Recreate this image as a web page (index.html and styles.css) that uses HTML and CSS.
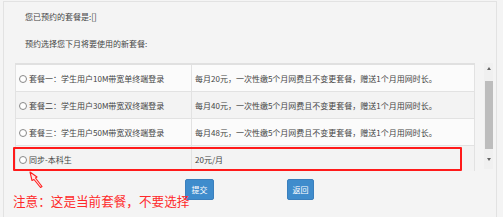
FILE: index.html
```html
<!DOCTYPE html>
<html lang="zh-CN">
<head>
<meta charset="utf-8">
<title>套餐预约</title>
<link rel="stylesheet" href="styles.css">
</head>
<body>
<div class="panel">
  <p class="line first">您已预约的套餐是:[]</p>
  <p class="line second">预约选择您下月将要使用的新套餐:</p>
  <div class="scroll-area">
    <div class="table-view">
      <table class="plans">
        <tr class="odd">
          <td class="c1"><span class="radio"></span>套餐一：学生用户10M带宽单终端登录</td>
          <td class="c2">每月20元，一次性缴5个月网费且不变更套餐，赠送1个月用网时长。</td>
        </tr>
        <tr class="even">
          <td class="c1"><span class="radio"></span>套餐二：学生用户30M带宽双终端登录</td>
          <td class="c2">每月40元，一次性缴5个月网费且不变更套餐，赠送1个月用网时长。</td>
        </tr>
        <tr class="odd">
          <td class="c1"><span class="radio"></span>套餐三：学生用户50M带宽双终端登录</td>
          <td class="c2">每月48元，一次性缴5个月网费且不变更套餐，赠送1个月用网时长。</td>
        </tr>
        <tr class="even">
          <td class="c1"><span class="radio"></span>同步-本科生</td>
          <td class="c2">20元/月</td>
        </tr>
      </table>
    </div>
    <div class="scrollbar">
      <span class="arrow up"></span>
      <span class="thumb"></span>
      <span class="arrow down"></span>
    </div>
  </div>
  <div class="actions">
    <span class="btn submit">提交</span>
    <span class="btn back">返回</span>
  </div>
</div>
<div class="highlight"></div>
<svg class="pointer" width="20" height="24" viewBox="0 0 20 24">
  <polygon points="2,1 9,6 7.5,7 14,15.5 12.5,16.5 6,8.5 4,9.5" fill="#ffe6e6" stroke="#ff2020" stroke-width="1.1" stroke-linejoin="round"/>
</svg>
<div class="note">注意：这是当前套餐，不要选择</div>
</body>
</html>
```
FILE: styles.css
```css
html, body {
  margin: 0;
  padding: 0;
}
body {
  background: #f4f4f4;
  font-family: "Noto Sans CJK SC", "Noto Sans", sans-serif;
  color: #444;
  width: 503px;
  height: 217px;
  overflow: hidden;
  position: relative;
}
.panel {
  margin: 1px 6px 0 3px;
  border: 1px solid #e2e2e2;
  border-bottom: none;
  height: 216px;
  padding-top: 9px;
  box-sizing: border-box;
}
.line {
  margin: 0;
  padding-left: 21px;
  font-size: 8px;
  line-height: 12px;
}
.line.second {
  margin-top: 15px;
}
.scroll-area {
  display: flex;
  margin-top: 13px;
  margin-left: 11px;
  height: 108px;
}
.table-view {
  width: 460px;
  height: 108px;
  overflow: hidden;
  border-top: 2px solid #e0e0e0;
  box-sizing: border-box;
}
.plans {
  border-collapse: collapse;
  width: 460px;
  font-size: 8px;
  color: #444;
}
.plans td {
  border: 1px solid #e2e2e2;
  height: 26px;
  padding: 0 3px;
  white-space: nowrap;
  vertical-align: middle;
}
.plans tr:first-child td {
  border-top: none;
}
.plans td.c1 {
  width: 169px;
}
.plans tr.odd td {
  background: #fbfbfb;
}
.plans tr.even td {
  background: #f3f3f3;
}
.radio {
  display: inline-block;
  width: 6px;
  height: 6px;
  border: 1px solid #888;
  border-radius: 50%;
  background: #fff;
  vertical-align: -1px;
  margin-right: 2px;
}
.scrollbar {
  margin-left: 9px;
  width: 9px;
  height: 106px;
  background: #f0f0f0;
  display: flex;
  flex-direction: column;
  align-items: center;
}
.arrow {
  width: 0;
  height: 0;
  border-left: 2.5px solid transparent;
  border-right: 2.5px solid transparent;
}
.arrow.up {
  margin-top: 4px;
  border-bottom: 3px solid #666;
}
.arrow.down {
  margin-top: 9px;
  border-top: 3px solid #666;
}
.thumb {
  margin-top: 11px;
  width: 8px;
  height: 68px;
  background: #bdbdbd;
}
.actions {
  display: flex;
  margin-top: 8px;
  padding-left: 181px;
  gap: 73px;
}
.btn {
  display: flex;
  align-items: center;
  justify-content: center;
  height: 21px;
  background: #3f8ccc;
  border: 1px solid #3a7fbd;
  box-sizing: border-box;
  border-radius: 2px;
  color: #fff;
  font-size: 8px;
}
.btn.submit {
  width: 29px;
}
.btn.back {
  width: 27px;
}
.highlight {
  position: absolute;
  left: 13px;
  top: 147px;
  width: 449px;
  height: 24px;
  border: 2px solid #ff1a1a;
  box-sizing: border-box;
  border-radius: 1px;
}
.pointer {
  position: absolute;
  left: 28px;
  top: 171px;
}
.note {
  position: absolute;
  left: 13px;
  top: 192px;
  font-size: 12.6px;
  line-height: 18px;
  color: #ff2a2a;
  white-space: nowrap;
}
```
